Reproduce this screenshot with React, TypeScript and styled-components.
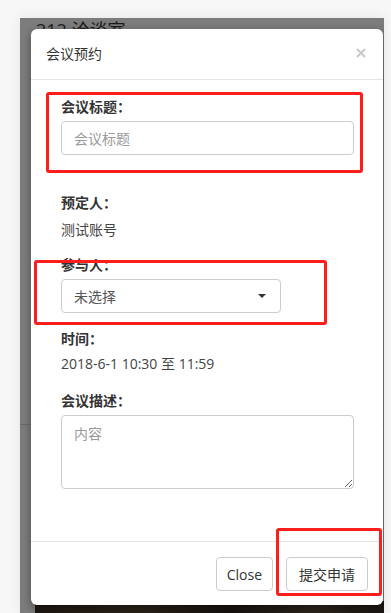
import styled, { createGlobalStyle } from "styled-components";

const GlobalStyle = createGlobalStyle`
  html, body {
    margin: 0;
    padding: 0;
    background: #f7f7f7;
    font-family: "Open Sans", "Noto Sans CJK SC", sans-serif;
    font-size: 14px;
    color: #333;
  }
  * {
    box-sizing: border-box;
  }
`;

// the app screen behind the dialog, dimmed by the backdrop
const Screen = styled.div`
  position: relative;
  display: flex;
  flex-direction: column;
  width: 364px;
  height: 595px;
  margin: 18px 0 0 20px;
  background: #7c7c7c;
  box-shadow: 0 0 12px rgba(0, 0, 0, 0.08);
  overflow: hidden;
`;

const RoomName = styled.div`
  padding: 1px 0 0 16px;
  font-size: 18px;
  line-height: 22px;
  color: #1d1d1d;
`;

const Rule = styled.div`
  height: 1px;
  margin-top: 383px;
  background: #6a6a6a;
`;

const Photo = styled.div`
  height: 12px;
  margin: auto 0 0 15px;
  background: linear-gradient(90deg, #1d1812 0%, #2a2218 30%, #16120e 55%, #2b241c 80%, #1a1612 100%);
`;

const Modal = styled.div`
  position: absolute;
  top: 11px;
  left: 11px;
  width: 352px;
  height: 576px;
  display: flex;
  flex-direction: column;
  background: #fff;
  border-radius: 6px;
  box-shadow: 0 3px 9px rgba(0, 0, 0, 0.4);
`;

const Header = styled.div`
  display: flex;
  align-items: center;
  justify-content: space-between;
  height: 51px;
  padding: 0 17px 0 15px;
  border-bottom: 1px solid #e5e5e5;
`;

const Title = styled.div`
  font-size: 14px;
  line-height: 20px;
  color: #333;
`;

const CloseIcon = styled.svg`
  width: 10px;
  height: 10px;
  margin-top: -2px;
`;

const Body = styled.div`
  flex: 1;
  padding: 17px 29px 0 30px;
`;

const Group = styled.div<{ $gap: number }>`
  margin-bottom: ${(p) => p.$gap}px;
`;

const Label = styled.div<{ $space?: number }>`
  font-weight: bold;
  line-height: 20px;
  color: #333;
  margin-bottom: ${(p) => p.$space ?? 4}px;
`;

const Static = styled.div`
  line-height: 20px;
  color: #444;
`;

const TextInput = styled.input`
  display: block;
  width: 100%;
  height: 34px;
  padding: 0 12px;
  border: 1px solid #ccc;
  border-radius: 4px;
  font: inherit;
  color: #555;
  outline: none;

  &::placeholder {
    color: #9a9a9a;
  }
`;

const Select = styled.div`
  display: flex;
  align-items: center;
  justify-content: space-between;
  width: 220px;
  height: 34px;
  padding: 0 14px 0 12px;
  border: 1px solid #ccc;
  border-radius: 4px;
  color: #555;
`;

const Caret = styled.span`
  width: 0;
  height: 0;
  border-top: 4px solid #333;
  border-left: 4px solid transparent;
  border-right: 4px solid transparent;
`;

const TextArea = styled.textarea`
  display: block;
  width: 100%;
  height: 74px;
  padding: 8px 12px;
  border: 1px solid #ccc;
  border-radius: 4px;
  font: inherit;
  line-height: 20px;
  color: #555;
  outline: none;

  &::placeholder {
    color: #9a9a9a;
  }
`;

const Footer = styled.div`
  display: flex;
  justify-content: flex-end;
  padding: 15px 15px 14px;
  border-top: 1px solid #e5e5e5;
`;

const Button = styled.button<{ $pad?: number }>`
  height: 34px;
  padding: 0 ${(p) => p.$pad ?? 12}px;
  border: 1px solid #ccc;
  border-radius: 4px;
  background: #fff;
  font: inherit;
  color: #333;

  & + & {
    margin-left: 13px;
  }
`;

// red annotation frames drawn over the screenshot
const Mark = styled.div<{ $top: number; $left: number; $w: number; $h: number }>`
  position: absolute;
  top: ${(p) => p.$top}px;
  left: ${(p) => p.$left}px;
  width: ${(p) => p.$w}px;
  height: ${(p) => p.$h}px;
  border: 3px solid #fc1d1d;
  border-radius: 3px;
  pointer-events: none;
`;

export default function App() {
  return (
    <>
      <GlobalStyle />
      <Screen>
        <RoomName>212 洽谈室</RoomName>
        <Rule />
        <Photo />

        <Modal>
          <Header>
            <Title>会议预约</Title>
            <CloseIcon viewBox="0 0 10 10">
              <path d="M1 1 L9 9 M9 1 L1 9" stroke="#c6c6c6" strokeWidth="1.8" />
            </CloseIcon>
          </Header>

          <Body>
            <Group $gap={38}>
              <Label>会议标题：</Label>
              <TextInput placeholder="会议标题" />
            </Group>
            <Group $gap={15}>
              <Label $space={7}>预定人：</Label>
              <Static>测试账号</Static>
            </Group>
            <Group $gap={16}>
              <Label>参与人：</Label>
              <Select>
                未选择
                <Caret />
              </Select>
            </Group>
            <Group $gap={17}>
              <Label $space={5}>时间：</Label>
              <Static>2018-6-1 10:30 至 11:59</Static>
            </Group>
            <Group $gap={0}>
              <Label>会议描述：</Label>
              <TextArea placeholder="内容" />
            </Group>
          </Body>

          <Footer>
            <Button $pad={10}>Close</Button>
            <Button>提交申请</Button>
          </Footer>

          <Mark $top={63} $left={15} $w={317} $h={81} />
          <Mark $top={231} $left={3} $w={293} $h={65} />
          <Mark $top={499} $left={245} $w={106} $h={68} />
        </Modal>
      </Screen>
    </>
  );
}
